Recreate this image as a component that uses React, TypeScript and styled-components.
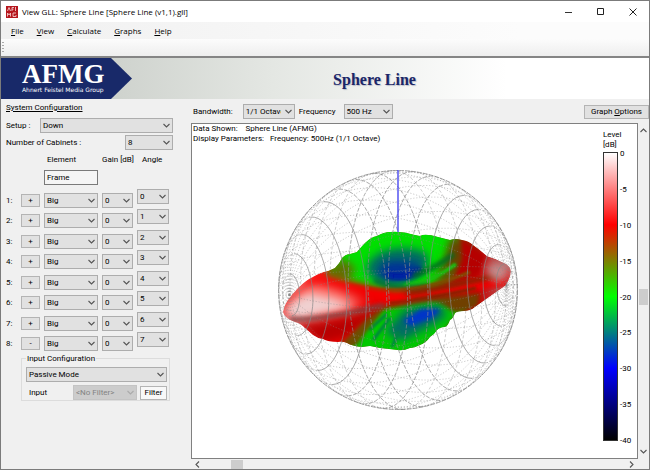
import React from "react";
import styled, { createGlobalStyle } from "styled-components";

const GlobalStyle = createGlobalStyle`
  * { box-sizing: border-box; }
  body { margin: 0; background: #fff; }
  button, select, input { font: inherit; color: inherit; margin: 0; border-radius: 0; }
`;

const Window = styled.main`
  display: flex;
  flex-direction: column;
  min-height: 100vh;
  border: 1px solid #7b7b7b;
  background: #f0f0f0;
  color: #000;
  font: 8px/12px Roboto, "Liberation Sans", sans-serif;
`;

const TitleBar = styled.header`
  display: flex;
  align-items: center;
  height: 21px;
  padding: 0 10px 0 5px;
  gap: 4px;
  background: #fff;
  font: 8px/12px "Open Sans", sans-serif;
`;

const WindowTitle = styled.h1`
  flex: 1;
  margin: 0;
  font-size: 8px;
  font-weight: 400;
`;

const WindowButtons = styled.div`
  display: flex;
  gap: 20px;
`;

const CaptionButton = styled.button`
  display: grid;
  place-items: center;
  width: 12px;
  height: 12px;
  padding: 0;
  border: 0;
  background: none;
`;

const MenuBar = styled.nav`
  display: flex;
  align-items: center;
  gap: 13px;
  height: 17px;
  padding: 0 10px;
  background: linear-gradient(90deg, #f0f0f0, #fcfcfc 80%);
  font: 8px/12px "Open Sans", sans-serif;
`;

const MenuItem = styled.button`
  padding: 0;
  border: 0;
  background: none;
`;

const ToolStrip = styled.div`
  display: flex;
  align-items: center;
  height: 19px;
  padding-left: 1px;
  background: linear-gradient(#fcfcfc, #eee);
  border-bottom: 2px solid #858585;
`;

const Grip = styled.span`
  width: 2px;
  height: 11px;
  background: repeating-linear-gradient(#aaa 0 1px, transparent 1px 3px);
`;

const Banner = styled.section`
  display: flex;
  height: 41px;
  background: linear-gradient(90deg, #cfd3ce 18%, #e4e7e3 42%, #fff 78%);
`;

const Brand = styled.div`
  width: 131px;
  padding: 4px 0 0 21px;
  background: #182969;
  clip-path: polygon(0 0, 110px 0, 100% 50%, 110px 100%, 0 100%);
  color: #fff;
  white-space: nowrap;
`;

const BrandName = styled.div`
  font: bold 27px/24px "Liberation Serif", serif;
`;

const BrandTag = styled.div`
  font: 6px/7px "DejaVu Sans", sans-serif;
`;

const BannerTitle = styled.h2`
  flex: 1;
  margin: 0;
  padding-right: 32px;
  text-align: center;
  color: #1a2668;
  font: bold 16px/44px "Liberation Serif", serif;
  text-shadow: 1px 1px 1px #b9bcc8;
`;

const Body = styled.div`
  display: grid;
  grid-template-columns: 190px minmax(0, 1fr);
  flex: 1;
`;

const Sidebar = styled.aside`
  display: flex;
  flex-direction: column;
  padding: 3px 18px 4px 5px;
`;

const SectionTitle = styled.h3`
  margin: 0 0 3px;
  font-size: 8px;
  font-weight: 400;
  text-decoration: underline;
`;

const Field = styled.div`
  display: flex;
  align-items: center;
  justify-content: space-between;
  height: 17px;
`;

const SelectBox = styled.span<{ $w?: number; $off?: boolean }>`
  display: grid;
  align-items: center;
  width: ${(p) => (p.$w ? `${p.$w}px` : "100%")};
  height: 15px;
  border: 1px solid ${(p) => (p.$off ? "#c4c4c4" : "#adadad")};
  background: ${(p) => (p.$off ? "#ccc" : "#e1e1e1")};
  color: ${(p) => (p.$off ? "#838383" : "#000")};
  select, svg { grid-area: 1 / 1; }
  svg { justify-self: end; margin-right: 2px; pointer-events: none; }
`;

const NativeSelect = styled.select`
  appearance: none;
  width: 100%;
  height: 13px;
  padding: 0 13px 0 2px;
  border: 0;
  background: none;
  line-height: 13px;
  opacity: 1;
  text-overflow: clip;
`;

const CabinetGrid = styled.div`
  display: grid;
  grid-template-columns: 11px 19px 54px 31px 32px;
  column-gap: 4px;
  align-items: center;
`;

const HeadingGrid = styled(CabinetGrid)`
  grid-template-rows: 16px 16px;
  row-gap: 1px;
  margin-top: 1px;
`;

const RowGrid = styled(CabinetGrid)`
  height: 158px;
  margin-top: 8px;
  align-content: space-between;
`;

const Heading = styled.span<{ $col: number; $inset: number }>`
  grid-column: ${(p) => p.$col};
  padding-left: ${(p) => p.$inset}px;
  white-space: nowrap;
`;

const FrameInput = styled.input`
  grid-column: 3;
  width: 54px;
  height: 15px;
  padding: 0 2px;
  border: 1px solid #7a7a7a;
  background: #f5f5f5;
`;

const RowLabel = styled.span`
  line-height: 15px;
`;

const PushButton = styled.button`
  height: 14px;
  padding: 0 5px;
  border: 1px solid #b4b4b4;
  background: #e1e1e1;
  line-height: 11px;
  white-space: nowrap;
`;

const StepButton = styled(PushButton)`
  width: 19px;
  height: 13px;
  padding: 0;
  line-height: 9px;
`;

const RaisedCell = styled.span`
  align-self: start;
  margin-top: -4px;
  height: 15px;
`;

const InputGroup = styled.fieldset`
  margin: 2px 0 0 15px;
  padding: 3px 2px 0 4px;
  width: 149px;
  height: 48px;
  border: 1px solid #dcdcdc;
  legend { padding: 0 1px; line-height: 11px; }
`;

const FilterRow = styled.div`
  display: flex;
  align-items: center;
  gap: 3px;
  margin-top: 3px;
`;

const FilterLabel = styled.span`
  padding-left: 3px;
  margin-right: auto;
`;

const FilterButton = styled(PushButton)`
  width: 27px;
  padding: 0;
  background: #f8f8f8;
`;

const Main = styled.section`
  display: flex;
  flex-direction: column;
  min-width: 0;
`;

const GraphBar = styled.div`
  display: flex;
  align-items: center;
  gap: 4px;
  height: 24px;
  padding: 1px 0 0 2px;
`;

const GraphButton = styled(PushButton)`
  margin-left: auto;
  padding: 0 6px;
`;

const GraphLabel = styled.label`
  margin-right: 4px;
`;

const BandwidthLabel = styled(GraphLabel)`
  margin-right: 6px;
`;

const GraphArea = styled.div`
  display: grid;
  grid-template-columns: minmax(0, 1fr) 11px;
  grid-template-rows: 1fr 10px;
  flex: 1;
`;

const Plot = styled.div`
  display: grid;
  grid-template-columns: minmax(0, 1fr) 34px;
  grid-template-rows: auto 1fr;
  border: 1px solid #808080;
  background: #fff;
`;

const PlotInfo = styled.div`
  padding: 0 1px;
  line-height: 10px;
  white-space: pre;
`;

const Figure = styled.div`
  display: grid;
  justify-items: center;
  align-items: start;
  padding-top: 25px;
`;

const Legend = styled.div`
  grid-column: 2;
  grid-row: 1 / 3;
  padding-top: 6px;
  line-height: 10px;
`;

const Scale = styled.div`
  display: flex;
  height: 289px;
  margin-top: 2px;
  gap: 2px;
`;

const ScaleBar = styled.div`
  width: 15px;
  border: 1px solid #333;
  background: linear-gradient(#fff, #f00 25%, #0f0 50%, #00f 75%, #000);
`;

const ScaleTicks = styled.div`
  display: flex;
  flex-direction: column;
  justify-content: space-between;
  margin: -3px 0 -5px;
`;

const VerticalScroll = styled.div`
  display: flex;
  flex-direction: column;
  align-items: center;
  justify-content: space-between;
  padding: 4px 0;
`;

const HorizontalScroll = styled.div`
  display: flex;
  align-items: center;
  padding: 0 3px;
  justify-content: space-between;
`;

const Thumb = styled.div<{ $vertical?: boolean }>`
  width: ${(p) => (p.$vertical ? "9px" : "12px")};
  height: ${(p) => (p.$vertical ? "16px" : "9px")};
  margin: ${(p) => (p.$vertical ? "155px 0 auto" : "0 auto 0 30px")};
  background: #cdcdcd;
`;

const Chevron = ({ angle = 0, color = "#555" }: { angle?: number; color?: string }) => (
  <svg width="7" height="7" viewBox="0 0 7 7" aria-hidden="true">
    <path d="M.5 2 3.5 5 6.5 2" fill="none" stroke={color} strokeWidth="1.1" transform={`rotate(${angle} 3.5 3.5)`} />
  </svg>
);

type DropProps = { id?: string; label?: string; value: string; w?: number; off?: boolean };
const Drop = ({ id, label, value, w, off }: DropProps) => (
  <SelectBox $w={w} $off={off}>
    <NativeSelect id={id} aria-label={label} defaultValue={value} disabled={off}>
      <option>{value}</option>
    </NativeSelect>
    <Chevron color={off ? "#aaa" : "#555"} />
  </SelectBox>
);

const R = 119.5;
const CX = 398;
const CY = 290;
const TILT = (-2.6 * Math.PI) / 180;
const AX = 0.91;
const AZ = Math.sqrt(1 - AX * AX);
const rad = (d: number) => (d * Math.PI) / 180;

const project = (lat: number, lon: number) => {
  const s = Math.sin(rad(lat));
  const c = Math.cos(rad(lat));
  const x = -AX * c + AZ * s * Math.cos(rad(lon));
  const y = s * Math.sin(rad(lon));
  return [
    CX + R * (x * Math.cos(TILT) - y * Math.sin(TILT)),
    CY + R * (x * Math.sin(TILT) + y * Math.cos(TILT)),
  ];
};

const trace = (points: number[][]) => "M" + points.map((p) => p.map((v) => v.toFixed(1)).join(" ")).join("L");
const steps = (from: number, to: number, by: number) =>
  Array.from({ length: Math.round((to - from) / by) + 1 }, (_, i) => from + i * by);

const ringHalf = (lat: number, inner: boolean) => {
  const start = (lat < 90) === inner ? -90 : 90;
  return trace(steps(start, start + 180, 6).map((lon) => project(lat, lon)));
};
const meridian = (lon: number) => trace(steps(0, 180, 6).map((lat) => project(lat, lon)));

const OUTLINE =
  "M283 312Q285 301 298 288Q306 280 313 277Q321 272 328 271L335 268Q340 263 342 258Q346 254 350 254L357 252Q361 247 365 243Q371 237 377 236Q384 232 390 232Q402 231 415 235L420 236Q425 233 438 237L450 240Q456 238 462 240Q469 241 473 245Q480 250 487 256Q494 258 502 262Q508 264 510 268Q513 274 505 286L495 293L475 307Q471 311 464 311Q457 311 455 313Q453 319 450 320Q448 326 445 327Q440 327 437 330Q434 335 430 337Q426 343 420 345Q414 348 410 348Q403 351 398 350L380 348L370 346L362 347Q352 346 347 343Q342 341 338 342Q328 342 323 339Q317 338 313 335L305 328Q300 323 295 322Q285 319 283 312Z";

const Balloon = () => (
  <svg width="242" height="242" viewBox="277 169 242 242" role="img" aria-label="Directivity balloon at 500 Hz">
    <defs>
      <clipPath id="body"><path d={OUTLINE} /></clipPath>
      <filter id="b1" x="-50%" y="-50%" width="200%" height="200%"><feGaussianBlur stdDeviation="1.3" /></filter>
      <filter id="b2" x="-50%" y="-50%" width="200%" height="200%"><feGaussianBlur stdDeviation="2" /></filter>
      <filter id="b4" x="-50%" y="-50%" width="200%" height="200%"><feGaussianBlur stdDeviation="4" /></filter>
      <filter id="b7" x="-50%" y="-50%" width="200%" height="200%"><feGaussianBlur stdDeviation="7" /></filter>
      <linearGradient id="base" gradientUnits="userSpaceOnUse" x1="283" x2="511" y1="300" y2="280">
        <stop offset="0" stopColor="#d88" /><stop offset=".2" stopColor="#f00" />
        <stop offset=".4" stopColor="#b01800" /><stop offset=".7" stopColor="#902800" />
        <stop offset=".85" stopColor="#c80000" /><stop offset="1" stopColor="#b07070" />
      </linearGradient>
    </defs>
    <g fill="none" stroke="#808080" strokeWidth=".7">
      {steps(0, 350, 20).map((lon) => (
        <path key={lon} d={meridian(lon)} strokeDasharray="1.2 1.8" strokeOpacity=".6" />
      ))}
      {steps(10, 170, 10).map((lat) => (
        <path key={lat} d={ringHalf(lat, false)} strokeDasharray="3 2" strokeOpacity=".55" />
      ))}
      <circle cx={CX} cy={CY} r={R} strokeDasharray="5 1" />
    </g>
    <g clipPath="url(#body)">
      <path d={OUTLINE} fill="url(#base)" />
      <path d="M328 280 338 250 370 220H450L462 248 458 268 435 287 395 292 345 284Z" fill="#00e000" filter="url(#b4)" />
      <path d="M328 272 342 258 356 268 350 279 325 284Z" fill="#607000" filter="url(#b4)" />
      <path d="M450 238Q470 239 480 252L463 271 434 284 444 262Z" fill="#6a4200" filter="url(#b4)" />
      <path d="M461 238 486 255 480 273 453 282 462 259Z" fill="#b50000" filter="url(#b2)" />
      <path d="M366 272Q367 252 398 248Q428 247 429 261Q422 279 399 284Q376 284 366 272Z" fill="#007060" filter="url(#b4)" />
      <path d="M378 273Q381 259 400 261Q422 262 421 268Q413 281 396 281Q380 281 378 273Z" fill="#003098" filter="url(#b4)" />
      <path d="M388 275Q404 281 421 269" fill="none" stroke="#0010b0" strokeWidth="4" filter="url(#b2)" />
      <path d="M413 276Q436 268 454 254" fill="none" stroke="#006c24" strokeWidth="5" filter="url(#b2)" />
      <path d="M404 286Q432 282 456 264" fill="none" stroke="#14c010" strokeWidth="4" filter="url(#b1)" />
      <path d="M374 280Q398 292 428 286" fill="none" stroke="#006440" strokeWidth="4" filter="url(#b2)" />
      <path d="M350 285Q407 299 470 272" fill="none" stroke="#805000" strokeWidth="3" filter="url(#b1)" />
      <path d="M283 303 318 275Q350 286 395 293Q458 288 510 268V286Q450 292 400 301Q350 315 283 316Z" fill="#eb0500" filter="url(#b2)" />
      <path d="M404 294Q450 287 499 275" fill="none" stroke="#7d2700" strokeWidth="4" filter="url(#b2)" />
      <path d="M390 303Q430 299 476 288" fill="none" stroke="#882400" strokeWidth="3" filter="url(#b1)" />
      <path d="M345 352 364 328 384 309 430 302 473 301 455 317 443 333 410 355Z" fill="#00c800" filter="url(#b2)" />
      <path d="M436 301 480 293 478 306 456 313Z" fill="#704000" filter="url(#b2)" />
      <path d="M385 332 405 309 440 305 447 316 429 327 402 341Z" fill="#006d65" filter="url(#b4)" />
      <path d="M403 321 421 309 441 309 432 318 411 326Z" fill="#0435c8" filter="url(#b2)" />
      <path d="M387 314 369 330M390 318 373 340M399 331 392 347" fill="none" stroke="#008243" strokeWidth="3" filter="url(#b1)" />
      <path d="M291 318Q335 322 380 308L350 336 323 345Z" fill="#b90006" filter="url(#b4)" />
      <path d="M339 346 366 320 382 309 356 346Z" fill="#6c5000" filter="url(#b2)" />
      <path d="M283 312Q293 290 314 281Q343 289 365 304Q340 312 307 320Z" fill="#ff8078" filter="url(#b7)" />
      <path d="M283 313Q290 300 309 294Q330 297 355 307Q325 311 299 320Z" fill="#f0d0d0" filter="url(#b4)" />
      <path d="M290 319Q320 321 384 305" fill="none" stroke="#804040" strokeWidth="4" filter="url(#b2)" />
      <path d="M304 279Q337 278 372 292Q390 297 408 296" fill="none" stroke="#f00" strokeWidth="5" filter="url(#b4)" />
      <path d="M490 263Q508 261 511 273L500 283Q482 276 490 263Z" fill="#c58b8b" filter="url(#b4)" />
    </g>
    <g fill="none" stroke="#888" strokeWidth=".7">
      {steps(10, 350, 20).map((lon) => (
        <path key={lon} d={meridian(lon)} strokeDasharray="1.2 1.8" strokeOpacity=".6" />
      ))}
      {steps(10, 170, 10).map((lat) => (
        <path key={lat} d={ringHalf(lat, true)} strokeDasharray={lat > 50 && lat < 130 ? "4 1.5" : undefined} />
      ))}
    </g>
    <path d="M398 170V232" stroke="#4848ef" strokeWidth="1.4" />
  </svg>
);

const MENU = ["File", "View", "Calculate", "Graphs", "Help"];
const CABINETS = [0, 1, 2, 3, 4, 5, 6, 7];
const LEVELS = [0, -5, -10, -15, -20, -25, -30, -35, -40];

export default function App() {
  return (
    <>
      <GlobalStyle />
      <Window>
        <TitleBar>
          <svg width="12" height="12" viewBox="0 0 12 12" aria-hidden="true">
            <path fill="#b5161d" d="M0 0h12v12H0z" />
            <path d="M1.5 5 3 1.5 4.5 5M6 5V1.5h2M6 3.2h1.5M9.5 1v4M1.5 10.5V7L3 9l1.5-2v3.5M10 7H7v3.5h3V9" fill="none" stroke="#f3c8c8" strokeWidth=".9" />
          </svg>
          <WindowTitle>View GLL: Sphere Line [Sphere Line (v1,1).gll]</WindowTitle>
          <WindowButtons>
            <CaptionButton aria-label="Minimize">
              <svg width="8" height="8"><path d="M0 4.5h7" stroke="#333" /></svg>
            </CaptionButton>
            <CaptionButton aria-label="Maximize">
              <svg width="8" height="8"><path d="M.5 .5h6v6h-6z" fill="none" stroke="#222" /></svg>
            </CaptionButton>
            <CaptionButton aria-label="Close">
              <svg width="8" height="8"><path d="m.5.5 7 7m0-7-7 7" stroke="#222" /></svg>
            </CaptionButton>
          </WindowButtons>
        </TitleBar>
        <MenuBar>
          {MENU.map((m) => (
            <MenuItem key={m}><u>{m[0]}</u>{m.slice(1)}</MenuItem>
          ))}
        </MenuBar>
        <ToolStrip><Grip /></ToolStrip>
        <Banner>
          <Brand>
            <BrandName>AFMG</BrandName>
            <BrandTag>Ahnert Feistel Media Group</BrandTag>
          </Brand>
          <BannerTitle>Sphere Line</BannerTitle>
        </Banner>
        <Body>
          <Sidebar>
            <SectionTitle>System Configuration</SectionTitle>
            <Field><label htmlFor="setup">Setup :</label><Drop id="setup" value="Down" w={133} /></Field>
            <Field><label htmlFor="count">Number of Cabinets :</label><Drop id="count" value="8" w={48} /></Field>
            <HeadingGrid>
              <Heading $col={3} $inset={3}>Element</Heading>
              <Heading $col={4} $inset={0}>Gain [dB]</Heading>
              <Heading $col={5} $inset={5}>Angle</Heading>
              <FrameInput aria-label="Frame element" defaultValue="Frame" />
            </HeadingGrid>
            <RowGrid>
              {CABINETS.map((n) => (
                <React.Fragment key={n}>
                  <RowLabel>{n + 1}:</RowLabel>
                  <StepButton>{n < 7 ? "+" : "-"}</StepButton>
                  <Drop label={`Element ${n + 1}`} value="Big" />
                  <Drop label={`Gain ${n + 1}`} value="0" />
                  <RaisedCell><Drop label={`Angle ${n + 1}`} value={String(n)} /></RaisedCell>
                </React.Fragment>
              ))}
            </RowGrid>
            <InputGroup>
              <legend>Input Configuration</legend>
              <Drop label="Input configuration" value="Passive Mode" />
              <FilterRow>
                <FilterLabel>Input</FilterLabel>
                <Drop label="Input filter" value="<No Filter>" w={64} off />
                <FilterButton>Filter</FilterButton>
              </FilterRow>
            </InputGroup>
          </Sidebar>
          <Main>
            <GraphBar>
              <BandwidthLabel htmlFor="bandwidth">Bandwidth:</BandwidthLabel>
              <Drop id="bandwidth" value="1/1 Octave" w={52} />
              <GraphLabel htmlFor="frequency">Frequency</GraphLabel>
              <Drop id="frequency" value="500 Hz" w={49} />
              <GraphButton>Graph <u>O</u>ptions</GraphButton>
            </GraphBar>
            <GraphArea>
              <Plot>
                <PlotInfo>
                  <div>{"Data Shown:    Sphere Line (AFMG)"}</div>
                  <div>{"Display Parameters:   Frequency: 500Hz (1/1 Octave)"}</div>
                </PlotInfo>
                <Figure><Balloon /></Figure>
                <Legend>
                  <div>Level</div>
                  <div>[dB]</div>
                  <Scale>
                    <ScaleBar />
                    <ScaleTicks>{LEVELS.map((l) => <span key={l}>{l}</span>)}</ScaleTicks>
                  </Scale>
                </Legend>
              </Plot>
              <VerticalScroll>
                <Chevron angle={180} />
                <Thumb $vertical />
                <Chevron />
              </VerticalScroll>
              <HorizontalScroll>
                <Chevron angle={90} />
                <Thumb />
                <Chevron angle={-90} />
              </HorizontalScroll>
            </GraphArea>
          </Main>
        </Body>
      </Window>
    </>
  );
}
